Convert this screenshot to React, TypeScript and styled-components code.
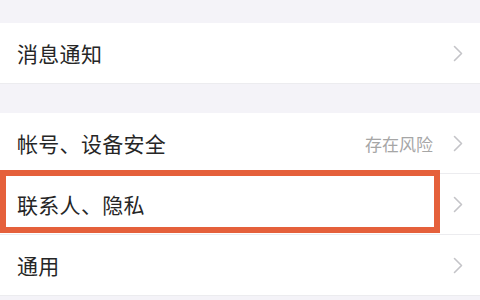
import { FC } from 'react'
import styled, { createGlobalStyle } from 'styled-components'

const GlobalStyle = createGlobalStyle`
  html, body {
    margin: 0;
    padding: 0;
    background: #f4f3f8;
    font-family: "Noto Sans CJK SC", "Noto Sans", sans-serif;
  }
`

const Page = styled.div`
  width: 480px;
  height: 300px;
  overflow: hidden;
  background: #f4f3f8;
  padding-top: 23px;
  box-sizing: border-box;
  display: flex;
  flex-direction: column;
  gap: 29px;
`

const Group = styled.div`
  background: #ffffff;
  display: flex;
  flex-direction: column;
`

const Row = styled.div`
  position: relative;
  height: 60px;
  display: flex;
  align-items: center;
  padding: 0 17px;
  border-bottom: 1px solid #ececef;
`

const Label = styled.div`
  flex: 1 1 auto;
  font-size: 21px;
  color: #262626;
  letter-spacing: 0.3px;
`

const Hint = styled.div`
  font-size: 17px;
  color: #a6a6a6;
  margin-right: 20px;
`

const Chevron = styled.svg`
  width: 10px;
  height: 17px;
  flex: 0 0 auto;
`

const Highlight = styled.div`
  position: absolute;
  left: 0;
  top: -4px;
  width: 440px;
  height: 63px;
  box-sizing: border-box;
  border: 6px solid #e5603b;
  pointer-events: none;
`

interface IItem {
  label: string
  hint?: string
  marked?: boolean
}

const Arrow: FC = () => (
  <Chevron viewBox="0 0 10 17">
    <polyline
      points="1.5,1.5 8.5,8.5 1.5,15.5"
      fill="none"
      stroke="#c4c4c8"
      strokeWidth="1.6"
      strokeLinecap="round"
      strokeLinejoin="round"
    />
  </Chevron>
)

const Item: FC<IItem> = ({ label, hint, marked }) => (
  <Row>
    <Label>{label}</Label>
    {hint && <Hint>{hint}</Hint>}
    <Arrow />
    {marked && <Highlight />}
  </Row>
)

const App: FC = () => (
  <Page>
    <GlobalStyle />
    <Group>
      <Item label="消息通知" />
    </Group>
    <Group>
      <Item label="帐号、设备安全" hint="存在风险" />
      <Item label="联系人、隐私" marked />
      <Item label="通用" />
    </Group>
  </Page>
)

export default App
